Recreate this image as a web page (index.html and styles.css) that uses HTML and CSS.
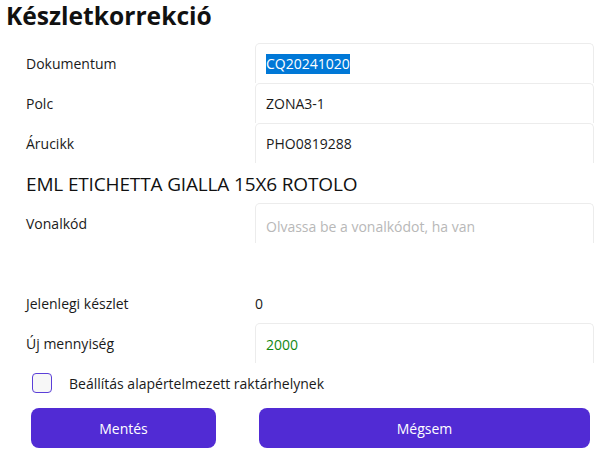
FILE: index.html
```html
<!DOCTYPE html>
<html lang="hu">
<head>
<meta charset="utf-8">
<link rel="stylesheet" href="styles.css">
</head>
<body>
<div class="page">
  <h1 class="title">Készletkorrekció</h1>
  <div class="form">
    <div class="label">Dokumentum</div>
    <div class="field"><span class="selected">CQ20241020</span></div>
    <div class="label">Polc</div>
    <div class="field">ZONA3-1</div>
    <div class="label">Árucikk</div>
    <div class="field">PHO0819288</div>
    <div class="heading">EML ETICHETTA GIALLA 15X6 ROTOLO</div>
    <div class="label">Vonalkód</div>
    <div class="field placeholder">Olvassa be a vonalkódot, ha van</div>
    <div class="spacer"></div>
    <div class="label">Jelenlegi készlet</div>
    <div class="value">0</div>
    <div class="label">Új mennyiség</div>
    <div class="field green">2000</div>
  </div>
  <label class="check">
    <span class="box"></span>
    <span class="check-text">Beállítás alapértelmezett raktárhelynek</span>
  </label>
  <div class="buttons">
    <button class="btn btn-save">Mentés</button>
    <button class="btn btn-cancel">Mégsem</button>
  </div>
</div>
</body>
</html>
```

FILE: styles.css
```css
* { box-sizing: border-box; }
html, body { margin: 0; padding: 0; background: #fff; }
body {
  font-family: "Open Sans", "Noto Sans", sans-serif;
  color: #1a1a1a;
  width: 602px;
  height: 454px;
  overflow: hidden;
}
.title {
  margin: 0;
  padding: 0 0 0 6px;
  height: 43px;
  font-size: 24.6px;
  font-weight: 700;
  line-height: 32px;
  color: #111;
}
.form {
  display: grid;
  grid-template-columns: 229px 339px;
  grid-auto-rows: 40px;
  padding-left: 26px;
}
.label {
  display: flex;
  align-items: center;
  font-size: 14px;
  color: #1a1a1a;
}
.field {
  display: flex;
  align-items: center;
  padding-left: 10px;
  font-size: 14px;
  color: #1a1a1a;
  border: 1px solid #ececec;
  border-bottom: none;
  border-radius: 5px 5px 0 0;
}
.value {
  display: flex;
  align-items: center;
  font-size: 14px;
}
.selected {
  background: #0078d7;
  color: #fff;
  line-height: 20px;
}
.heading {
  grid-column: 1 / 3;
  display: flex;
  align-items: center;
  font-size: 19px;
  letter-spacing: -0.15px;
  color: #111;
  padding-top: 2px;
}
.placeholder { color: #b8b8b8; padding-top: 5px; }
.green { color: #128812; padding-top: 2px; }
.spacer { grid-column: 1 / 3; }
.check {
  display: flex;
  align-items: center;
  height: 40px;
  padding-left: 32px;
  gap: 17px;
  font-size: 14px;
}
.box {
  width: 20px;
  height: 20px;
  border: 1.5px solid #5b3fd8;
  border-radius: 4px;
  background: #f7f7f7;
}
.buttons {
  display: flex;
  gap: 43px;
  padding: 5px 0 0 31px;
}
.btn {
  height: 40px;
  border: none;
  border-radius: 8px;
  background: #512bd4;
  color: #fff;
  font-family: "Open Sans", "Noto Sans", sans-serif;
  font-size: 14px;
}
.btn-save { width: 185px; }
.btn-cancel { width: 331px; }
```
